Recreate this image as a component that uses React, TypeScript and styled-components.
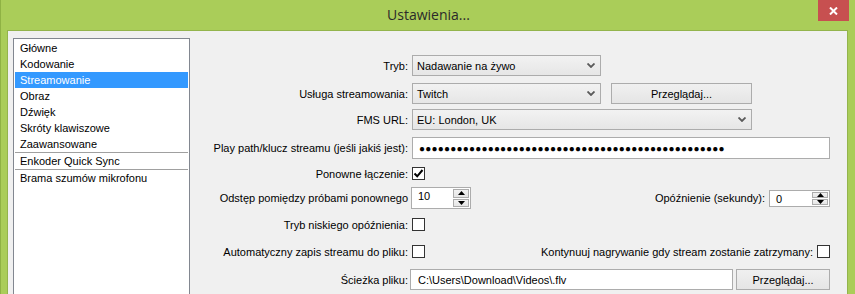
import React from "react";
import styled, { createGlobalStyle } from "styled-components";

const Global = createGlobalStyle`
  html, body { margin: 0; padding: 0; background: #aacd59; }
  body { font-family: "Liberation Sans", Arial, sans-serif; font-size: 11px; color: #000; }
  * { box-sizing: border-box; }
`;

const Window = styled.div`
  width: 855px;
  height: 294px;
  overflow: hidden;
  background: #aacd59;
  border-left: 1px solid #8fb244;
  display: flex;
  flex-direction: column;
`;

const TitleBar = styled.div`
  height: 30px;
  flex: none;
  display: grid;
  grid-template-columns: 1fr auto 1fr;
  align-items: start;
`;

const Title = styled.div`
  grid-column: 2;
  font-family: "Open Sans", "Noto Sans", sans-serif;
  font-size: 14px;
  color: #2a2a2a;
  line-height: 30px;
  padding-left: 1px;
`;

const CloseButton = styled.div`
  grid-column: 3;
  justify-self: end;
  margin-right: 6px;
  width: 31px;
  height: 21px;
  background: #c75050;
  display: flex;
  align-items: center;
  justify-content: center;
`;

const Body = styled.div`
  margin: 0 7px 0 6px;
  flex: 1;
  background: #f0f0f0;
  border: 1px solid #93b44c;
  border-bottom: none;
  display: flex;
  align-items: flex-start;
`;

const ListBox = styled.div`
  margin: 7px 0 0 5px;
  width: 177px;
  height: 300px;
  flex: none;
  background: #fff;
  border: 1px solid #828790;
  padding: 1px;
  display: flex;
  flex-direction: column;
`;

const ListItem = styled.div<{ $selected?: boolean; $divider?: boolean }>`
  height: 16px;
  line-height: 16px;
  padding-left: 5px;
  white-space: nowrap;
  background: ${(p) => (p.$selected ? "#3399ff" : "transparent")};
  color: ${(p) => (p.$selected ? "#fff" : "#000")};
  border-top: ${(p) => (p.$divider ? "1px solid #a0a0a0" : "none")};
  height: ${(p) => (p.$divider ? "17px" : "16px")};
`;

const Form = styled.div`
  flex: 1;
  padding: 24px 17px 0 0;
  display: flex;
  flex-direction: column;
`;

const Row = styled.div<{ $top: number; $h: number }>`
  margin-top: ${(p) => p.$top}px;
  height: ${(p) => p.$h}px;
  display: grid;
  grid-template-columns: 218px 1fr;
  column-gap: 4px;
  align-items: center;
`;

const Label = styled.div`
  text-align: right;
  white-space: nowrap;
`;

const Controls = styled.div<{ $spread?: boolean; $shift?: number }>`
  display: flex;
  align-items: center;
  height: 100%;
  margin-left: ${(p) => p.$shift ?? 0}px;
  justify-content: ${(p) => (p.$spread ? "space-between" : "flex-start")};
`;

const Combo = styled.div<{ $w: number }>`
  width: ${(p) => p.$w}px;
  height: 100%;
  border: 1px solid #acacac;
  background: linear-gradient(#f2f2f2, #e6e6e6);
  display: flex;
  align-items: center;
  justify-content: space-between;
  padding: 0 5px 0 4px;
  white-space: nowrap;
`;

const Button = styled.div<{ $w: number; $ml?: number }>`
  width: ${(p) => p.$w}px;
  height: 100%;
  margin-left: ${(p) => p.$ml ?? 0}px;
  border: 1px solid #acacac;
  background: linear-gradient(#f0f0f0, #e5e5e5);
  display: flex;
  align-items: center;
  justify-content: center;
`;

const TextBox = styled.div<{ $w: number }>`
  width: ${(p) => p.$w}px;
  height: 100%;
  border: 1px solid #acacac;
  background: #fff;
  display: flex;
  align-items: center;
  padding-left: 7px;
  white-space: nowrap;
  overflow: hidden;
`;

const Dots = styled.span`
  font-family: "Liberation Sans", "DejaVu Sans", sans-serif;
  font-size: 10px;
  letter-spacing: 0.2px;
  margin-left: -1px;
`;

const CheckBox = styled.div`
  width: 13px;
  height: 13px;
  border: 1px solid #333;
  background: #fff;
  display: flex;
  align-items: center;
  justify-content: center;
  flex: none;
`;

const Spin = styled.div<{ $w: number }>`
  width: ${(p) => p.$w}px;
  height: 100%;
  border: 1px solid #acacac;
  background: #fff;
  display: flex;
  align-items: stretch;
  flex: none;
`;

const SpinValue = styled.div`
  flex: 1;
  padding: 2px 0 0 6px;
`;

const SpinButtons = styled.div`
  width: 16px;
  margin: 1px 1px 1px 0;
  display: flex;
  flex-direction: column;
  gap: 1px;
`;

const SpinButton = styled.div`
  flex: 1;
  border: 1px solid #acacac;
  background: linear-gradient(#f2f2f2, #e5e5e5);
  display: flex;
  align-items: center;
  justify-content: center;
`;

const Inline = styled.div`
  display: flex;
  align-items: center;
  gap: 4px;
  white-space: nowrap;
`;

const Chevron = () => (
  <svg width="8" height="5" viewBox="0 0 8 5">
    <path d="M0.5 0.5 L4 4 L7.5 0.5" fill="none" stroke="#5a5a5a" strokeWidth="1.8" />
  </svg>
);

const Check = () => (
  <svg width="11" height="11" viewBox="0 0 11 11">
    <path d="M1.5 5.5 L4.2 8.3 L9.5 2" fill="none" stroke="#000" strokeWidth="2" />
  </svg>
);

const Tri = ({ up }: { up?: boolean }) => (
  <svg width="7" height="4" viewBox="0 0 7 4">
    <path d={up ? "M0 4 L7 4 L3.5 0 Z" : "M0 0 L7 0 L3.5 4 Z"} fill="#000" />
  </svg>
);

const CloseX = () => (
  <svg width="9" height="8" viewBox="0 0 9 8">
    <path d="M1 0.5 L8 7.5 M8 0.5 L1 7.5" stroke="#fff" strokeWidth="2" />
  </svg>
);

const SpinBox = ({ value, w }: { value: string; w: number }) => (
  <Spin $w={w}>
    <SpinValue>{value}</SpinValue>
    <SpinButtons>
      <SpinButton>
        <Tri up />
      </SpinButton>
      <SpinButton>
        <Tri />
      </SpinButton>
    </SpinButtons>
  </Spin>
);

const items = [
  "Główne",
  "Kodowanie",
  "Streamowanie",
  "Obraz",
  "Dźwięk",
  "Skróty klawiszowe",
  "Zaawansowane",
];

export default function App() {
  return (
    <>
      <Global />
      <Window>
        <TitleBar>
          <Title>Ustawienia...</Title>
          <CloseButton>
            <CloseX />
          </CloseButton>
        </TitleBar>
        <Body>
          <ListBox>
            {items.map((it) => (
              <ListItem key={it} $selected={it === "Streamowanie"}>
                {it}
              </ListItem>
            ))}
            <ListItem $divider>Enkoder Quick Sync</ListItem>
            <ListItem $divider>Brama szumów mikrofonu</ListItem>
          </ListBox>
          <Form>
            <Row $top={0} $h={21}>
              <Label>Tryb:</Label>
              <Controls>
                <Combo $w={189}>
                  <span>Nadawanie na żywo</span>
                  <Chevron />
                </Combo>
              </Controls>
            </Row>
            <Row $top={7} $h={21}>
              <Label>Usługa streamowania:</Label>
              <Controls>
                <Combo $w={189}>
                  <span>Twitch</span>
                  <Chevron />
                </Combo>
                <Button $w={141} $ml={10}>Przeglądaj...</Button>
              </Controls>
            </Row>
            <Row $top={5} $h={21}>
              <Label>FMS URL:</Label>
              <Controls>
                <Combo $w={340}>
                  <span>EU: London, UK</span>
                  <Chevron />
                </Combo>
              </Controls>
            </Row>
            <Row $top={7} $h={22}>
              <Label>Play path/klucz streamu (jeśli jakiś jest):</Label>
              <Controls>
                <TextBox $w={418}>
                  <Dots>{"●".repeat(49)}</Dots>
                </TextBox>
              </Controls>
            </Row>
            <Row $top={8} $h={13}>
              <Label>Ponowne łączenie:</Label>
              <Controls>
                <CheckBox>
                  <Check />
                </CheckBox>
              </Controls>
            </Row>
            <Row $top={7} $h={22}>
              <Label>Odstęp pomiędzy próbami ponownego</Label>
              <Controls $spread $shift={-1}>
                <SpinBox value="10" w={60} />
                <Inline>
                  <span>Opóźnienie (sekundy):</span>
                  <SpinBox value="0" w={61} />
                </Inline>
              </Controls>
            </Row>
            <Row $top={9} $h={13}>
              <Label>Tryb niskiego opóźnienia:</Label>
              <Controls>
                <CheckBox />
              </Controls>
            </Row>
            <Row $top={14} $h={13}>
              <Label>Automatyczny zapis streamu do pliku:</Label>
              <Controls $spread>
                <CheckBox />
                <Inline>
                  <span>Kontynuuj nagrywanie gdy stream zostanie zatrzymany:</span>
                  <CheckBox />
                </Inline>
              </Controls>
            </Row>
            <Row $top={11} $h={21}>
              <Label>Ścieżka pliku:</Label>
              <Controls $shift={-2}>
                <TextBox $w={323}>C:\Users\Download\Videos\.flv</TextBox>
                <Button $w={94} $ml={3}>Przeglądaj...</Button>
              </Controls>
            </Row>
          </Form>
        </Body>
      </Window>
    </>
  );
}
